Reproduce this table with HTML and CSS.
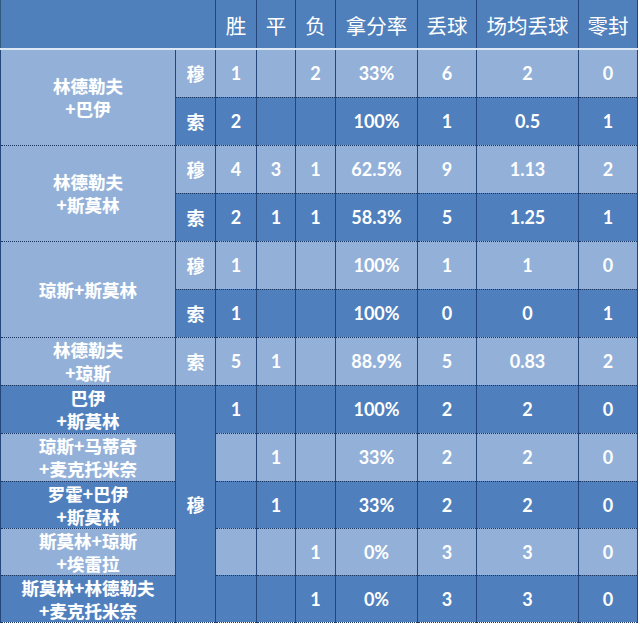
FILE: index.html
```html
<!DOCTYPE html>
<html lang="zh">
<head>
<meta charset="utf-8">
<title>组合数据</title>
<link rel="stylesheet" href="styles.css">
</head>
<body>
<table class="stats">
  <colgroup>
    <col class="c-name"><col class="c-side"><col class="c-w"><col class="c-d"><col class="c-l">
    <col class="c-rate"><col class="c-ga"><col class="c-avg"><col class="c-cs">
  </colgroup>
  <thead>
    <tr class="head">
      <th colspan="2"></th><th>胜</th><th>平</th><th>负</th><th>拿分率</th><th>丢球</th><th>场均丢球</th><th>零封</th>
    </tr>
  </thead>
  <tbody>
    <tr class="r48 lt">
      <td class="name lt" rowspan="2">林德勒夫<br>+巴伊</td><td class="side lt">穆</td>
      <td>1</td><td></td><td>2</td><td>33%</td><td>6</td><td>2</td><td>0</td>
    </tr>
    <tr class="r48 dk">
      <td class="side dk">索</td>
      <td>2</td><td></td><td></td><td>100%</td><td>1</td><td>0.5</td><td>1</td>
    </tr>
    <tr class="r48 lt">
      <td class="name lt" rowspan="2">林德勒夫<br>+斯莫林</td><td class="side lt">穆</td>
      <td>4</td><td>3</td><td>1</td><td>62.5%</td><td>9</td><td>1.13</td><td>2</td>
    </tr>
    <tr class="r48 dk">
      <td class="side dk">索</td>
      <td>2</td><td>1</td><td>1</td><td>58.3%</td><td>5</td><td>1.25</td><td>1</td>
    </tr>
    <tr class="r48 lt">
      <td class="name lt" rowspan="2">琼斯+斯莫林</td><td class="side lt">穆</td>
      <td>1</td><td></td><td></td><td>100%</td><td>1</td><td>1</td><td>0</td>
    </tr>
    <tr class="r48 dk">
      <td class="side dk">索</td>
      <td>1</td><td></td><td></td><td>100%</td><td>0</td><td>0</td><td>1</td>
    </tr>
    <tr class="r48 lt">
      <td class="name lt">林德勒夫<br>+琼斯</td><td class="side lt">索</td>
      <td>5</td><td>1</td><td></td><td>88.9%</td><td>5</td><td>0.83</td><td>2</td>
    </tr>
    <tr class="r48 dk">
      <td class="name dk">巴伊<br>+斯莫林</td><td class="side dk" rowspan="5">穆</td>
      <td>1</td><td></td><td></td><td>100%</td><td>2</td><td>2</td><td>0</td>
    </tr>
    <tr class="r48 lt">
      <td class="name lt">琼斯+马蒂奇<br>+麦克托米奈</td>
      <td></td><td>1</td><td></td><td>33%</td><td>2</td><td>2</td><td>0</td>
    </tr>
    <tr class="r47 dk">
      <td class="name dk">罗霍+巴伊<br>+斯莫林</td>
      <td></td><td>1</td><td></td><td>33%</td><td>2</td><td>2</td><td>0</td>
    </tr>
    <tr class="r47 lt">
      <td class="name lt">斯莫林+琼斯<br>+埃雷拉</td>
      <td></td><td></td><td>1</td><td>0%</td><td>3</td><td>3</td><td>0</td>
    </tr>
    <tr class="r47 dk">
      <td class="name dk">斯莫林+林德勒夫<br>+麦克托米奈</td>
      <td></td><td></td><td>1</td><td>0%</td><td>3</td><td>3</td><td>0</td>
    </tr>
  </tbody>
</table>
</body>
</html>
```
FILE: styles.css
```css
html, body {
  margin: 0;
  padding: 0;
  background: #ffffff;
}

.stats {
  table-layout: fixed;
  border-collapse: collapse;
  width: 637px;
  color: #ffffff;
  font-family: "Liberation Sans", "Noto Sans CJK SC", sans-serif;
  border-left: 1px solid #2f5a7a;
}

.c-name { width: 175px; }
.c-side { width: 40px; }
.c-w { width: 41px; }
.c-d { width: 39px; }
.c-l { width: 40px; }
.c-rate { width: 82px; }
.c-ga { width: 59px; }
.c-avg { width: 102px; }
.c-cs { width: 59px; }

.stats th,
.stats td {
  padding: 0;
  text-align: center;
  vertical-align: middle;
  border-left: 1px solid #24467a;
  border-right: 1px solid #24467a;
  border-top: 1px dotted #1c3560;
  border-bottom: 1px dotted #1c3560;
}

.head {
  height: 49px;
  background: #4f80bc;
}

.head th {
  font-family: "Noto Sans CJK SC", sans-serif;
  font-weight: 400;
  font-size: 20.5px;
  border-top: none;
  border-bottom: 2px solid #dce8f4;
  padding-top: 2px;
}

.head th:first-child {
  border-right: 1px solid #24467a;
  border-left: none;
}

.r48 { height: 48px; }
.r47 { height: 47px; }

.lt { background: #93b1d8; }
.dk { background: #4f80bd; }

.stats td {
  font-family: "Lato", "Liberation Sans", sans-serif;
  font-weight: 700;
  font-size: 18px;
}

.stats td.name {
  font-family: "Noto Sans CJK SC", sans-serif;
  font-weight: 700;
  font-size: 17.5px;
  line-height: 23px;
  text-shadow: 0 0 1px rgba(255,255,255,0.4);
}

.stats td.side {
  font-family: "Noto Sans CJK SC", sans-serif;
  font-weight: 700;
  font-size: 18px;
}
```
